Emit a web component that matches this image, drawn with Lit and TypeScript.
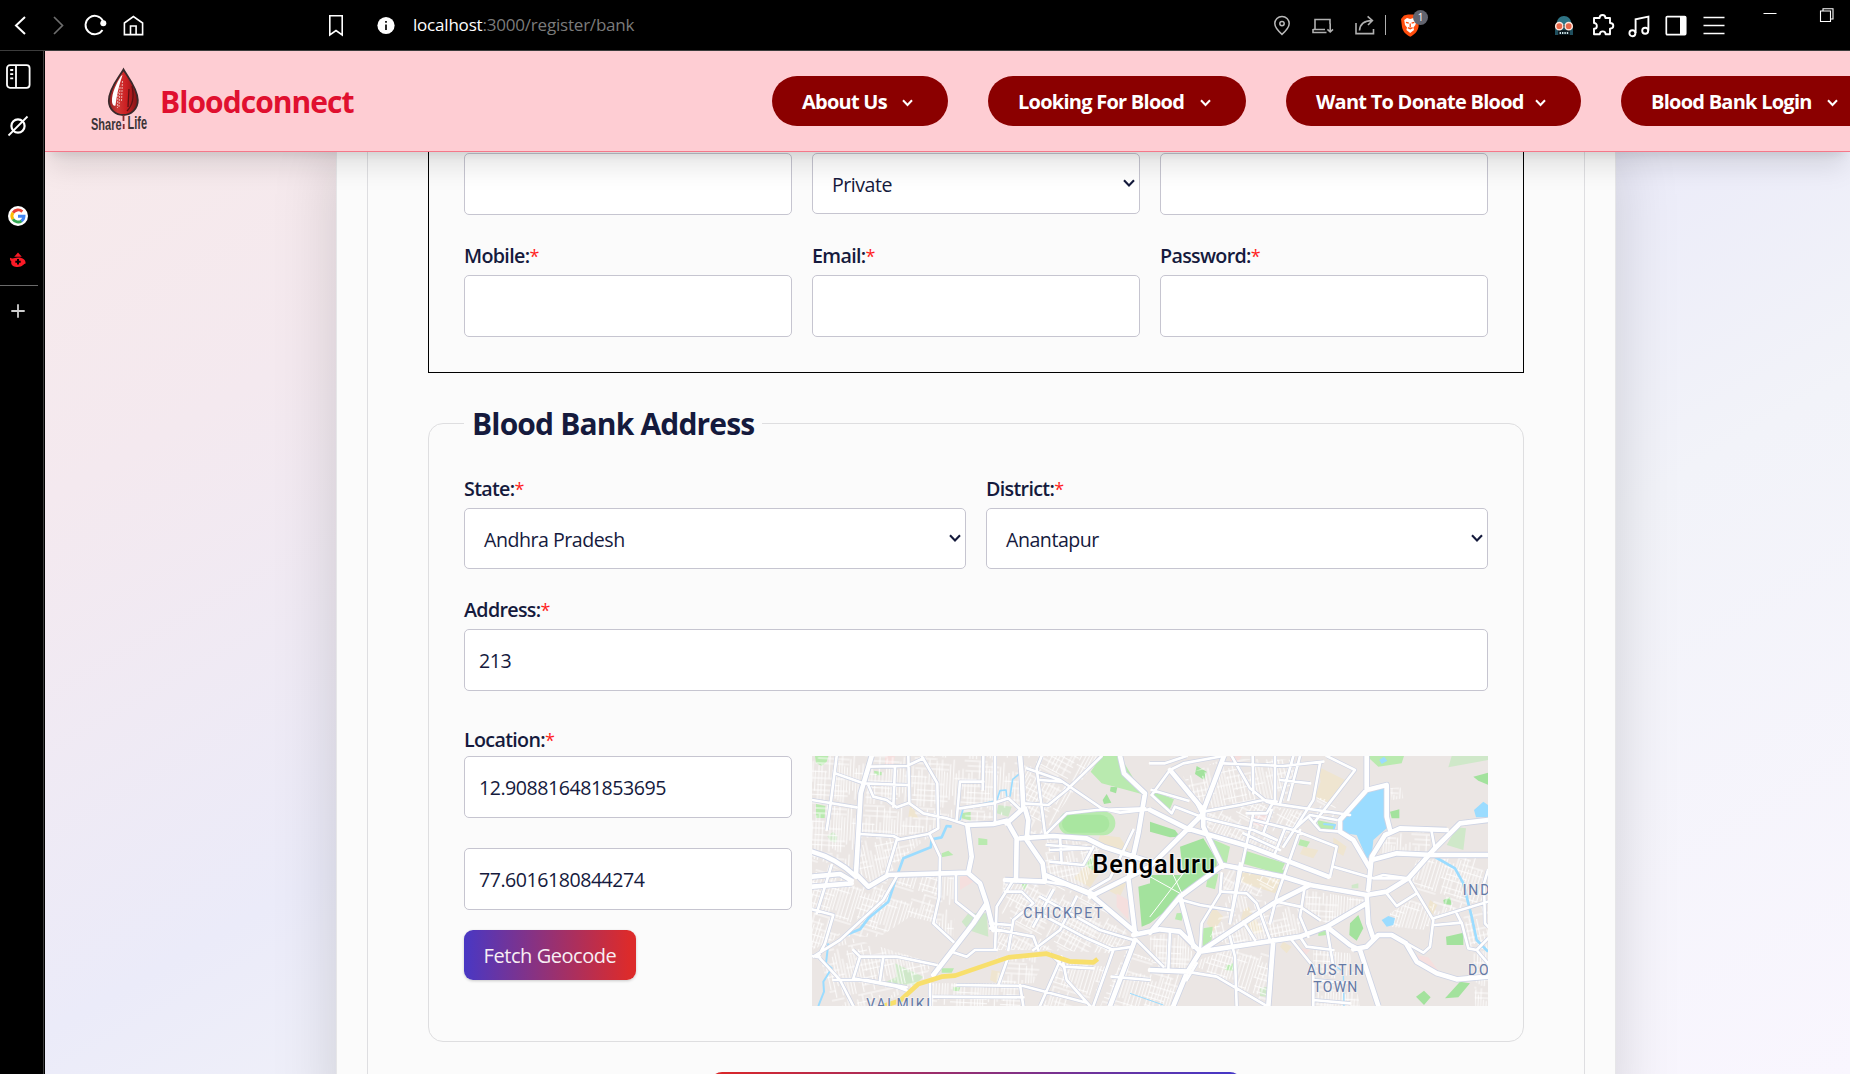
import { LitElement, html, svg, css, nothing } from "lit";
import { customElement, property } from "lit/decorators.js";

/* ---------- city map ---------- */

type Area = [string, string];

const GROUND_AREAS: Area[] = [
  ["#efe5d0", "M1555 50 L1640 92 L1585 158 L1545 140 L1562 95Z M860 345 L905 360 L870 412 L820 385Z M900 255 L960 262 L985 300 L945 310 L890 285Z M1345 470 L1390 545 L1350 555 L1320 520 L1330 480Z M1240 470 L1270 500 L1240 545 L1220 520Z M985 385 L960 440 L905 410 L985 375Z M335 165 L355 205 L325 200 L330 168Z M575 660 L602 665 L590 700 L570 690Z M1600 262 L1640 290 L1630 318 L1600 300Z M1890 450 L1912 465 L1895 500 L1880 485Z M1450 575 L1475 590 L1460 610 L1440 590Z M1320 360 L1450 385 L1425 430 L1320 395Z M1510 290 L1555 300 L1540 325 L1500 312Z"],
  ["#f5dfde", "M255 18 L285 18 L280 42 L255 42Z M480 380 L515 375 L520 395 L480 420Z M1352 198 L1405 192 L1395 232 L1355 222Z M950 430 L985 450 L985 510 L950 470Z M1848 615 L1885 622 L1915 662 L1870 648Z M1290 18 L1325 18 L1315 35 L1290 35Z M1505 595 L1530 600 L1515 620 L1505 612Z"],
  ["#cfe8c9", "M505 490 L560 490 L565 560 L505 540 L485 515Z M285 640 L370 680 L345 705 L250 700 L290 680Z M1955 18 L2064 18 L2064 30 L1945 52Z M1970 232 L1998 235 L1990 300 L1940 285Z M595 165 L635 170 L625 200 L590 190Z M82 258 L100 245 L112 260 L108 278 L90 272Z M1380 715 L1402 710 L1400 740 L1380 738Z M1655 405 L1675 400 L1675 415 L1655 415Z"],
  ["#b9eaaf", "M45 18 L85 18 L80 35 L65 48 L48 38Z M48 162 L76 168 L74 204 L48 204Z M905 18 L960 18 L1018 115 L1025 132 L905 100 L872 65Z M1065 125 L1122 148 L1105 188 L1055 135Z M1330 300 L1455 340 L1440 372 L1325 340Z M1230 265 L1290 290 L1280 340 L1255 330Z M1225 370 L1255 372 L1245 418 L1218 410Z M1210 535 L1238 530 L1235 570 L1208 590Z M535 264 L562 268 L562 285 L535 285Z M485 190 L512 185 L512 212 L485 205Z M425 655 L462 655 L455 668 L425 668Z M425 310 L445 302 L460 315 L425 322Z M222 62 L245 66 L245 76 L224 76Z M1440 360 L1460 358 L1455 380 L1438 372Z M665 402 L682 402 L672 420Z M1700 18 L1812 18 L1805 40 L1735 50Z M1500 268 L1530 275 L1520 292 L1495 285Z M1550 210 L1608 222 L1600 245 L1560 238Z M855 345 L880 315 L890 340 L880 362Z M915 410 L945 398 L935 418Z M1555 545 L1580 540 L1580 555 L1555 558Z M1130 490 L1150 488 L1145 512 L1125 508Z M460 712 L482 712 L476 724 L460 722Z M1280 645 L1300 640 L1300 662 L1275 660Z"],
  ["#a3e29d", "M1050 455 L1140 445 L1050 520 L1025 530 L1015 410 L1050 400Z M1140 290 L1210 265 L1250 330 L1250 370 L1150 440 L1050 520 L1050 375 L1150 375Z M1050 215 L1125 240 L1140 260 L1110 262 L1050 245Z M1190 48 L1220 65 L1212 90 L1185 72Z M1650 520 L1675 495 L1690 535 L1670 572 L1648 555Z M1770 185 L1798 178 L1798 205 L1775 205Z M1938 560 L1990 548 L1990 585 L1940 585Z M1935 745 L1980 695 L2010 700 L1975 742Z M1848 740 L1872 722 L1892 742 L1872 765Z M2020 80 L2064 68 L2064 104 L2035 92Z M908 150 L920 132 L934 158 L912 162Z M932 110 L952 112 L948 130 L930 124Z M1930 450 L1950 442 L1955 465 L1932 462Z"],
];

const WATER =
  "M1690 125 L1755 108 L1755 180 L1765 230 L1720 270 L1715 320 L1700 325 L1670 255 L1620 248 L1620 210 L1660 175Z M2022 180 L2050 155 L2064 165 L2064 202 L2028 202Z M1745 510 L1765 498 L1785 505 L1780 525 L1760 530Z M1738 30 L1752 20 L1762 32 L1745 42Z";

const STREAMS: [string, number][] = [
  ["M130 558 L180 538 L205 505 L265 455 L290 380 L310 325 L392 292 L395 268 L425 262 L440 228 L455 230", 8],
  ["M480 210 L490 175 L590 152 L600 122 L618 120 L620 140", 5],
  ["M630 140 L638 88 L660 70", 5],
  ["M85 580 L78 640 L95 655 L70 695 L72 725 L55 768", 6],
  ["M1895 315 L1965 355 L1990 400 L2015 500 L2030 570 L2064 605", 8],
  ["M1595 640 L1630 665 L1632 768", 4],
  ["M990 730 L1090 765", 3],
  ["M1570 222 L1605 225 L1600 240", 6],
];

const MAJOR_ROADS: string[] = [
  "M215 18 L182 130 L168 372 L205 410 L265 375 L505 368 L515 320 L502 225",
  "M36 305 Q110 325 168 380",
  "M36 410 L155 400",
  "M36 380 L120 372 L155 392",
  "M502 225 L580 222 L620 212 L650 265 L648 390",
  "M620 220 L670 175 L665 75 L660 18",
  "M675 175 L685 210 L680 270 L728 340 L735 395",
  "M505 370 L540 400 L560 460 L520 520 L400 675",
  "M560 460 L580 540",
  "M660 265 L760 258 L860 265 L910 290 L1050 335",
  "M735 375 L870 432 L1010 550",
  "M615 390 L735 395",
  "M960 18 L972 70 L1035 130 L1015 250 L985 385 L1005 550",
  "M1050 180 L1160 235 L1350 290 L1585 380",
  "M1110 60 L1210 180 L1210 230 L1268 350",
  "M1272 18 L1205 195 L1050 350 L870 440",
  "M1268 345 L1450 380 L1530 405 L1700 435 L1760 425 L1825 385 L1900 300 L1980 220 L2064 210",
  "M1050 548 L1140 440 L1262 350",
  "M1000 555 L1080 538 L1140 545 L1200 605 L1500 560 L1580 530",
  "M1200 605 L1420 460 L1530 405",
  "M1200 605 L1160 670 L1120 768",
  "M1050 660 L1165 665",
  "M1140 440 L1180 590",
  "M930 768 L1005 570",
  "M1580 530 L1650 585 L1680 600 L1735 768",
  "M1580 530 L1700 460",
  "M1660 598 L1700 590 L1735 555 L1775 555 L1818 580 L1850 635 L1910 670 L1970 688 L2064 680",
  "M1420 570 L1405 768",
  "M1700 435 L1705 520 L1720 565",
  "M1705 420 L1715 320 L1755 255 L1800 235 L1940 240",
  "M1700 18 L1700 120 L1760 105 L1760 200 L1770 240",
  "M1700 120 L1620 210 L1620 245 L1660 270 L1708 352",
  "M1715 330 L1790 310 L1900 315 L2064 315",
];

const MINOR_ROADS: string[] = [
  "M110 18 L92 160 L80 240",
  "M36 150 L170 172",
  "M105 70 L190 100 L320 105",
  "M285 50 L280 170",
  "M205 50 L320 48 L370 25",
  "M325 18 L328 160 L370 190 L440 205 L502 225",
  "M205 105 L220 140 L260 150 L290 172 L328 158",
  "M365 18 L412 100 L415 235 L385 252 L290 270 L260 370",
  "M180 252 L280 258 L300 268",
  "M390 255 L420 320 L418 440 L400 520 L460 575",
  "M470 210 L480 95 L550 95",
  "M550 18 L548 120",
  "M480 175 L580 160 L625 145 L660 178",
  "M585 18 L585 215",
  "M468 375 L468 455 L525 500",
  "M290 380 L250 450 L120 570 L40 620",
  "M95 345 L50 490",
  "M36 478 L100 495 L75 580 L55 620 L120 690 L160 768",
  "M36 618 L60 622",
  "M160 600 L180 620 L290 620 L410 645",
  "M180 620 L160 685 L290 710 L330 725",
  "M250 620 L240 690",
  "M100 690 L200 690 L320 712",
  "M680 55 L780 90 L905 175 L960 188 L1050 178",
  "M725 18 L710 55 L735 250",
  "M905 18 L800 120 L745 165 L670 160",
  "M720 90 L785 95",
  "M740 250 L800 190 L890 180 L1035 175",
  "M740 285 L870 295 L750 300",
  "M750 335 L850 345 L880 290",
  "M780 260 L785 340",
  "M735 395 L830 410 L880 430",
  "M640 390 L590 470 L585 600",
  "M615 425 L665 425 L700 460 L640 510 L625 600",
  "M570 520 L630 525",
  "M570 535 L700 560 L715 600",
  "M700 480 L850 560 L940 600",
  "M720 440 L900 540 L1000 570",
  "M760 420 L700 530",
  "M830 440 L780 540 L700 600",
  "M455 605 L500 620 L525 600 L590 600",
  "M390 700 L390 768",
  "M470 705 L670 708 L860 758",
  "M400 740 L670 742",
  "M660 705 L670 768",
  "M750 610 L790 650 L880 655",
  "M790 640 L800 690 L870 768",
  "M785 620 L720 768",
  "M940 600 L880 768",
  "M1010 570 L1090 650",
  "M935 680 L1050 690",
  "M930 600 L1000 590",
  "M625 620 L595 705",
  "M1000 240 L930 385 L870 420",
  "M1050 40 L1095 40 L1160 18",
  "M1055 135 L1110 60 L1150 40 L1270 18",
  "M1055 135 L1115 190 L1125 170 L1215 205 L1360 240 L1430 270",
  "M1055 120 L1165 152",
  "M1110 60 L1190 160 L1205 190",
  "M1210 185 L1320 165 L1390 150 L1430 155",
  "M1270 40 L1450 48 L1570 35",
  "M1295 18 L1350 115 L1400 155 L1415 160 L1650 195",
  "M1358 18 L1360 130",
  "M1425 18 L1425 160",
  "M1500 18 L1465 150",
  "M1480 18 L1440 160",
  "M1580 18 L1665 60 L1545 215",
  "M1560 40 L1540 150 L1450 290",
  "M1440 90 L1530 100",
  "M1360 190 L1325 350 L1290 520",
  "M1415 180 L1390 250 L1430 270",
  "M1340 190 L1400 190 L1415 165",
  "M1330 250 L1440 300",
  "M1455 235 L1425 310",
  "M1360 210 L1480 240 L1610 290 L1590 380",
  "M1500 240 L1430 440 L1410 520",
  "M1530 205 L1560 240 L1620 245",
  "M1480 240 L1530 195 L1610 210",
  "M1320 340 L1290 520",
  "M1265 370 L1260 430 L1205 520 L1200 600",
  "M1265 425 L1340 430 L1370 460 L1410 570",
  "M1145 450 L1200 465 L1290 480",
  "M1430 455 L1500 470 L1560 510",
  "M1515 405 L1500 500 L1525 560",
  "M1500 560 L1520 590 L1600 600",
  "M1475 570 L1540 650 L1540 768",
  "M1580 530 L1600 650",
  "M1330 515 L1365 570",
  "M1290 560 L1305 620 L1310 768",
  "M1160 665 L1250 680 L1400 768",
  "M1110 540 L1105 660",
  "M1160 690 L1190 640",
  "M1600 350 L1720 385 L1825 385",
  "M1720 385 L1750 375 L1825 385",
  "M1825 385 L1900 510 L1890 590 L1870 608 L1820 580",
  "M1760 430 L1790 468 L1850 430",
  "M1895 245 L1905 300",
  "M1900 505 L2064 455",
  "M1905 525 L1985 518 L2005 595 L2030 600 L2064 565",
  "M1985 520 L1970 490",
  "M2064 360 L2052 400 L2055 520 L2064 530",
  "M2030 600 L2064 640",
  "M1540 750 L1650 760",
  "M1540 690 L1650 700",
];

/* regions covered by the fine street grid: outline and pattern index */
const BLOCKS: [string, number][] = [
  ["M36 18 H215 L180 180 L170 380 L36 300Z", 0],
  ["M36 300 L160 390 L205 410 L265 385 L240 450 L100 570 L36 600Z", 1],
  ["M215 18 H410 L412 240 L280 260 L180 250Z", 0],
  ["M180 250 L400 250 L300 330 L265 380 L205 410 L170 370Z", 2],
  ["M410 18 H665 L660 180 L500 225 L415 200Z", 0],
  ["M290 380 L420 372 L410 520 L330 500 L240 560 L130 560Z", 1],
  ["M60 620 L140 560 L240 590 L400 640 L370 690 L240 768 H100Z", 2],
  ["M390 700 L660 700 V768 H390Z", 0],
  ["M425 380 L470 380 L460 560 L400 530Z", 0],
  ["M670 18 H900 L780 180 L735 255 L680 250Z", 3],
  ["M740 255 L900 290 L850 420 L730 380Z", 2],
  ["M610 395 L735 395 L870 440 L1000 560 L930 610 L740 600 L590 600Z", 3],
  ["M590 620 L740 615 L700 700 L590 700Z", 0],
  ["M780 640 L930 650 L880 768 H730Z", 1],
  ["M980 600 L1160 670 L1120 768 H900Z", 1],
  ["M1050 560 L1130 545 L1180 610 L1160 660 L1050 655Z", 0],
  ["M1150 80 L1270 25 L1500 30 L1470 150 L1210 185Z", 2],
  ["M1210 190 L1360 160 L1540 190 L1420 310 L1210 240Z", 3],
  ["M1290 430 L1420 460 L1500 480 L1500 560 L1300 590 L1230 560Z", 2],
  ["M1270 350 L1450 385 L1400 440 L1270 430Z", 3],
  ["M1170 640 L1280 600 L1410 590 L1400 768 L1310 710Z", 1],
  ["M1540 600 L1650 610 L1680 768 H1540Z", 0],
  ["M1520 420 L1700 450 L1600 530 L1500 480Z", 0],
  ["M1760 245 L1890 240 L1890 310 L1740 310Z", 0],
  ["M1850 330 L2050 320 L2050 450 L1910 500 L1830 385Z", 1],
  ["M1770 490 L1850 440 L1895 510 L1880 540 L1770 530Z", 1],
  ["M1990 500 L2064 460 V600 L2010 590Z", 2],
  ["M2020 610 L2064 600 V768 H2025Z", 0],
  ["M1550 140 L1620 160 L1600 210 L1550 205Z", 3],
  ["M1770 115 L1805 110 L1810 145 L1775 150Z", 0],
];

const PATTERN_ANGLES = [3, 17, -12, 28];

/** Broken street segments for one repeating tile. */
function streetTile(seed: number, size: number): string {
  let s = seed * 7919 + 17;
  const rnd = () => {
    s = (s * 1103515245 + 12345) % 2147483648;
    return s / 2147483648;
  };
  let d = "";
  for (let p = 4; p < size; p += 8 + Math.floor(rnd() * 5)) {
    const a = Math.floor(rnd() * size * 0.4);
    const len = size * (0.4 + rnd() * 0.55);
    d += `M${p} ${a}V${Math.min(size, a + len)}`;
  }
  for (let p = 6; p < size; p += 14 + Math.floor(rnd() * 12)) {
    const a = Math.floor(rnd() * size * 0.4);
    const len = size * (0.4 + rnd() * 0.6);
    d += `M${a} ${p}H${Math.min(size, a + len)}`;
  }
  return d;
}

@customElement("city-map")
class CityMap extends LitElement {
  static styles = css`
    :host { display: block; }
    svg { display: block; width: 100%; height: 100%; }
    .case { fill: none; stroke: #cdd3e4; stroke-linejoin: round; }
    .road { fill: none; stroke: #fff; stroke-linejoin: round; stroke-linecap: round; }
    .tile { fill: none; stroke: #fff; stroke-width: 2.7; }
    .stream { fill: none; stroke: #9bdcff; stroke-linejoin: round; }
    .city { font: 500 76px "Roboto", sans-serif; fill: #000; stroke: #fff; stroke-width: 7; stroke-opacity: .55; paint-order: stroke; }
    .area { font: 400 42px "Roboto", sans-serif; fill: #6479a6; stroke: #f3f0ef; stroke-width: 5; paint-order: stroke; }
  `;

  render() {
    return html`<svg viewBox="36 18 2028 750" preserveAspectRatio="none">
      <defs>
        ${PATTERN_ANGLES.map((a, i) => svg`<pattern id=${"g" + i} width="150" height="150" patternUnits="userSpaceOnUse" patternTransform=${`rotate(${a})`}>
          <path class="tile" d=${streetTile(i + 2, 150)}></path></pattern>`)}
      </defs>
      <rect x="36" y="18" width="2028" height="750" fill="#ebe6e4"></rect>
      ${GROUND_AREAS.map(([c, d]) => svg`<path fill=${c} d=${d}></path>`)}
      <rect x="776" y="184" width="170" height="72" rx="36" fill="#b9eaaf"></rect>
      <rect x="786" y="194" width="142" height="54" rx="27" fill="#a9e6a0"></rect>
      ${BLOCKS.map(([d, i]) => svg`<path d=${d} fill=${`url(#g${i})`}></path>`)}
      ${STREAMS.map(([d, w]) => svg`<path class="stream" d=${d} stroke-width=${w}></path>`)}
      <path d=${WATER} fill="#9bdcff"></path>
      <path d=${MINOR_ROADS.join("")} class="case" stroke-width="12"></path>
      <path d=${MAJOR_ROADS.join("")} class="case" stroke-width="19"></path>
      <path d=${MINOR_ROADS.join("")} class="road" stroke-width="8"></path>
      <path d=${MAJOR_ROADS.join("")} class="road" stroke-width="14"></path>
      <path class="road" stroke-width="3" d="M1050 380 L1140 430 M1150 370 L1050 500 M1120 375 L1150 440"></path>
      <path d="M250 768 L300 752 L355 702 L425 680 L465 677 L625 622 L740 611 L808 634 L880 637 L893 627" fill="none" stroke="#f8df6c" stroke-width="14" stroke-linejoin="round"></path>
      <text class="city" x="877" y="370" textLength="368">Bengaluru</text>
      <text class="area" x="670" y="504" textLength="238">CHICKPET</text>
      <text class="area" x="1520" y="675" textLength="172">AUSTIN</text>
      <text class="area" x="1540" y="726" textLength="132">TOWN</text>
      <text class="area" x="1988" y="435" textLength="80">IND</text>
      <text class="area" x="2004" y="675" textLength="62">DO</text>
      <text class="area" x="199" y="777" textLength="191">VALMIKI</text>
    </svg>`;
  }
}

/* ---------- form controls ---------- */

@customElement("form-field")
class FormField extends LitElement {
  @property() label = "";
  @property() value = "";
  @property() kind = "input";

  static styles = css`
    :host { display: block; }
    .label { height: 30px; margin-bottom: 5px; padding-top: 1px; box-sizing: border-box; line-height: 30px; font-size: 19.7px; font-weight: 600; letter-spacing: -0.68px; white-space: nowrap; }
    .star { color: #ff1f1f; font-weight: 400; font-size: 18px; }
    .box { box-sizing: border-box; display: flex; align-items: center; height: 62px; padding: 0 15px 0 14px;
      background: #fff; border: 1px solid #c6c5d0; border-radius: 5px; font-size: 19.6px; letter-spacing: -0.48px; }
    .box.select { height: 61px; padding: 2px 4px 0 19px; justify-content: space-between; }
    svg { width: 12px; height: 8px; margin-top: -3px; fill: none; stroke: #141a3c; stroke-width: 2.1; }
  `;

  render() {
    return html`
      ${this.label ? html`<div class="label">${this.label}<span class="star">*</span></div>` : nothing}
      <div class="box ${this.kind}">
        <span>${this.value}</span>
        ${this.kind === "select" ? html`<svg viewBox="0 0 12 8"><path d="M1 1.2 L6 6.4 L11 1.2"></path></svg>` : nothing}
      </div>`;
  }
}

/* ---------- browser chrome icons ---------- */

const I = {
  back: svg`<path d="M17 4 L8 12.5 L17 21" stroke-width="2"/>`,
  forward: svg`<path d="M8 4 L16.5 12.5 L8 21" stroke="#6d6d6d" stroke-width="1.7"/>`,
  reload: svg`<path d="M19 8 A9.2 9.2 0 1 0 18.5 17" stroke-width="1.9"/><circle cx="19.3" cy="10.3" r="3" fill="#fff" stroke="none"/>`,
  home: svg`<path d="M2.4 10 L11.4 3.6 L20.6 10 V21.6 H2.4Z M8.5 21.5 V13 H14.1 V21.5" stroke-width="1.6"/>`,
  bookmark: svg`<path d="M5.8 2.8 H18.2 V22 L12 17.6 L5.8 22Z" stroke-width="1.6"/>`,
  info: svg`<circle cx="12" cy="12.5" r="8.6" fill="#fff" stroke="none"/><path d="M12 11.5 V17 M12 8 V9.8" stroke="#111" stroke-width="1.8"/>`,
  pin: svg`<path d="M12 21.4 C7 17 4.8 14 4.8 10.6 A7.2 7.2 0 0 1 19.2 10.6 C19.2 14 17 17 12 21.4Z" stroke="#b9b9b9" stroke-width="1.5"/><circle cx="12" cy="10.6" r="2.2" stroke="#b9b9b9" stroke-width="1.5"/>`,
  laptop: svg`<path d="M4 16 V6.5 H19 V11 M2 16.5 H14 M2 16 V19.5 H15.5 M19.2 10.5 V18.8 M16.4 16.4 L19.2 19 L22 16.4" stroke="#b0b0b0" stroke-width="1.6"/>`,
  share: svg`<path d="M3 10 V20.6 H20.5 V16 M6.5 17.5 C7 11 11 7.6 19 7.6 M14.6 3.4 L19.4 7.6 L15 12" stroke="#b0b0b0" stroke-width="1.6"/>`,
  brave: svg`<path d="M6 2.5 L10 1.5 H15 L19 3 L21 6 L20.5 14 C19.5 19 16 21.5 12.3 23.8 C8 21.5 5 19 4 14 L3 6Z" fill="#ff4d0d" stroke="none"/>
    <path d="M6.2 7 L9 5 L12.2 6 L15.5 5 L18.4 7 L17.4 12 L15.4 14.6 L16 17 L12.2 20 L8.4 17 L9 14.6 L7 12Z" fill="#fff" stroke="none"/>
    <path d="M8 9.3 L10.8 10.2 M16.4 9.3 L13.6 10.2 M12.2 10.5 V14.4 M9.8 14.6 L12.2 15.8 L14.6 14.6" stroke="#ff4d0d" stroke-width="1.3"/>`,
  robot: svg`<path d="M4.5 12 C4.5 6 8 3 12 3 C16 3 19.5 6 19.5 12Z" fill="#2f7485" stroke="none"/><path d="M3 14 H21 V22 H3Z" fill="#1f4f5e" stroke="none"/><path d="M6 17 H18 V22 H6Z" fill="#0c1a20" stroke="none"/><path d="M7.6 20 H16.8" stroke="#cfe6ea" stroke-width="1.8" stroke-dasharray="1.4 1"/><circle cx="7.3" cy="13.2" r="3.6" fill="#e8694a" stroke="#ffe6dc" stroke-width="1.5"/><circle cx="16.7" cy="13.2" r="3.6" fill="#e8694a" stroke="#ffe6dc" stroke-width="1.5"/>`,
  puzzle: svg`<path d="M3 5 H8.6 C8.6 0.9 14.4 0.9 14.4 5 H19 V10 C23.4 10 23.4 15.6 19 15.6 V21.3 H14.6 C14.6 17.4 8.8 17.4 8.8 21.3 H3 V15.8 C6.8 15.8 6.8 10 3 10Z" stroke-width="1.9" stroke-linejoin="round"/>`,
  music: svg`<path d="M8.6 20 V6.2 L21.4 3.6 V17.6" stroke-width="1.9"/><circle cx="5.4" cy="20.2" r="3" stroke-width="1.9"/><circle cx="18.2" cy="17.8" r="3" stroke-width="1.9"/>`,
  panel: svg`<rect x="2.3" y="3.6" width="19.4" height="18" rx="1" stroke-width="1.7"/><path d="M16 3.6 H22 V21.6 H16Z" fill="#fff" stroke="none"/>`,
  menu: svg`<path d="M1.5 4.5 H22.5 M1.5 12.5 H22.5 M1.5 20.5 H22.5" stroke-width="1.7"/>`,
  minimize: svg`<path d="M5.5 1.5 H18.5" stroke-width="1"/>`,
  restore: svg`<path d="M5.5 3 H15.5 V13.5 H5.5Z M8 3 V0.8 H18 V11 H16" stroke-width="1.1"/>`,
};

const TOOLBAR: [keyof typeof I, string][] = [
  ["back", "m8"], ["forward", "m14"], ["reload", "m14"], ["home", "m14"], ["bookmark", "m178"], ["info", "m26"],
];
const TOOLS: [keyof typeof I, string][] = [
  ["robot", "m130"], ["puzzle", "m15"], ["music", "m12"], ["panel", "m13"], ["menu", "m14"],
];

const NAV: [string, string][] = [
  ["About Us", "w1"], ["Looking For Blood", "w2"], ["Want To Donate Blood", "w3"], ["Blood Bank Login", "w4"],
];

@customElement("app-root")
class AppRoot extends LitElement {
  static styles = css`
    :host { display: grid; grid-template-rows: 51px 1023px; width: 1850px; height: 1074px; overflow: hidden;
      background: #000; color: #151a3d; font: 20px "Open Sans", "Noto Sans", sans-serif; }
    * { box-sizing: border-box; }

    .toolbar { display: flex; align-items: flex-start; padding-top: 13px; border-bottom: 1px solid #3c3c3c; }
    .toolbar svg { flex: none; width: 24px; height: 24px; fill: none; stroke: #fff; overflow: visible; }
    .m8 { margin-left: 8px; } .m12 { margin-left: 12px; } .m13 { margin-left: 13px; } .m14 { margin-left: 14px; }
    .m15 { margin-left: 15px; } .m17 { margin-left: 17px; } .m18 { margin-left: 18px; } .m26 { margin-left: 26px; }
    .m130 { margin-left: 130px; } .m178 { margin-left: 178px; }
    .url { flex: none; width: 857px; padding-left: 15px; font-size: 17px; line-height: 24px; color: #7b7b7b; letter-spacing: -0.2px; white-space: nowrap; }
    .url b { color: #fff; font-weight: 400; }
    .rule { flex: none; width: 1px; height: 20px; margin: 2px 0 0 8px; background: #b0b0b0; }
    .shield { flex: none; position: relative; display: flex; margin-left: 12px; }
    .badge { position: absolute; left: 15px; top: -3px; width: 15px; height: 15px; border-radius: 50%; background: #62646f;
      color: #fff; font: 10px/15px "Open Sans", sans-serif; text-align: center; }
    .toolbar .min { margin: -1px 0 0 32px; }
    .toolbar .res { margin: -5px 0 0 33px; }

    .body { display: grid; grid-template-columns: 45px 1805px; }
    .side { display: flex; flex-direction: column; width: 44px; border-right: 1px solid #3c3c3c; padding-top: 12px; }
    .side svg { width: 26px; height: 26px; margin-left: 5px; fill: none; stroke: #fff; }
    .side .s2 { margin-top: 24px; } .side .s3 { margin-top: 64px; } .side .s4 { margin-top: 19px; }
    .side hr { width: 38px; height: 1px; margin: 11px 0 0; border: 0; background: #6a6a6a; }
    .side .s5 { margin-top: 12px; }

    .page { display: flex; flex-direction: column; height: 1023px; overflow: hidden;
      background: linear-gradient(to bottom right, #f8eaea 0%, #f4e9ef 22%, #ebebf9 48%, #f2f3f9 66%, #f9f6fe 100%); }
    header { position: relative; z-index: 2; flex: none; display: flex; align-items: center; height: 101px; padding: 0 0 1px 45px;
      background: #fecdd3; border-bottom: 1px solid #f4788a;
      box-shadow: 0 20px 25px -5px rgba(0,0,0,.1), 0 8px 10px -6px rgba(0,0,0,.1); }
    .logo { flex: none; width: 58px; height: 66px; margin-top: -1px; overflow: visible; }
    .logo text { font: 600 11px "Liberation Sans", sans-serif; fill: #3b3437; }
    .brand { flex: none; width: 624px; padding-left: 12px; margin-top: 2px; font-size: 30px; font-weight: 700; color: #e0102f; letter-spacing: -0.95px; }
    nav { flex: none; display: flex; gap: 40px; }
    .pill { flex: none; display: flex; align-items: center; justify-content: space-between; height: 50px; padding: 1px 35px 0 30px;
      border-radius: 25px; background: #8b0000; color: #fff; font-weight: 700; letter-spacing: -0.75px; white-space: nowrap; }
    .pill svg { width: 11px; height: 8px; margin-top: 4px; fill: none; stroke: #fff; stroke-width: 2; }
    .w1 { width: 176px; } .w2 { width: 258px; } .w3 { width: 295px; } .w4 { width: 252px; }

    .card { width: 1280px; height: 980px; margin-left: 291px; padding: 0 30px; background: #fbfbfb;
      border: solid #e6e6e8; border-width: 0 1px; box-shadow: 0 0 60px rgba(0,0,0,.15); }
    .sheet { height: 980px; padding: 0 60px; border: solid #dedee1; border-width: 0 1px; }
    .details { display: grid; grid-template-columns: repeat(3, 1fr); gap: 25px 20px; align-items: start;
      padding: 1px 35px 35px; border: 1px solid #000; border-top: 0; }
    .address { display: flex; flex-direction: column; margin: 28px 0 0; padding: 27px 35px 35px; border: 1px solid #dedee0; border-radius: 15px; }
    legend { width: 298px; height: 45px; padding: 0 0 0 8px; font-size: 30px; line-height: 46px; font-weight: 700; letter-spacing: -0.84px; white-space: nowrap; }
    .two { display: grid; grid-template-columns: 1fr 1fr; gap: 20px; margin-bottom: 25px; }
    .loc { margin-top: 33px; height: 32px; padding-top: 1px; line-height: 30px; font-size: 19.7px; font-weight: 600; letter-spacing: -0.68px; }
    .loc span { color: #ff1f1f; font-weight: 400; font-size: 18px; }
    .place { display: grid; grid-template-columns: 328px 676px; gap: 20px; }
    .coords { display: flex; flex-direction: column; align-items: stretch; }
    .coords form-field + form-field { margin-top: 30px; }
    .fetch { width: 172px; height: 50px; margin-top: 20px; border-radius: 9px; background: linear-gradient(to right, #4338ca -4%, #dc2b2b 96%);
      box-shadow: 0 1px 3px rgba(0,0,0,.2); color: #f8eef4; line-height: 51px; text-align: center; letter-spacing: -0.45px; font-weight: 500; }
    city-map { width: 676px; height: 250px; }
    .submit { width: 532px; height: 50px; margin: 30px auto 0; border-radius: 12px; background: linear-gradient(to right, #dc2626, #4338ca); }
  `;

  render() {
    const ic = (n: keyof typeof I, c: string) => html`<svg class=${c} viewBox="0 0 24 24">${I[n]}</svg>`;
    return html`
      <div class="toolbar">
        ${TOOLBAR.map(([n, c]) => ic(n, c))}
        <div class="url"><b>localhost</b>:3000/register/bank</div>
        ${ic("pin", "m15")}${ic("laptop", "m17")}${ic("share", "m18")}
        <div class="rule"></div>
        <div class="shield">${ic("brave", "")}<span class="badge">1</span></div>
        ${TOOLS.map(([n, c]) => ic(n, c))}
        ${ic("minimize", "min")}${ic("restore", "res")}
      </div>
      <div class="body">
        <div class="side">
          <svg viewBox="0 0 26 26"><rect x="2" y="2.2" width="22.6" height="22.6" rx="3" stroke-width="1.8"/><path d="M11 2.2 V24.8" stroke-width="1.8"/><path d="M5.2 7 H8.2 M5.2 11.2 H8.2 M5.2 15.4 H8.2" stroke-width="1.8"/></svg>
          <svg class="s2" viewBox="0 0 26 26"><circle cx="13" cy="13" r="6.6" stroke-width="2.2"/><path d="M3.5 22.5 L22.5 3.5" stroke-width="1.8"/></svg>
          <svg class="s3" viewBox="0 0 26 26"><circle cx="13" cy="13" r="10" fill="#fff" stroke="none"/>
            <g stroke-width="2.9"><path d="M17.3 8.6 A6 6 0 0 0 8 9.8" stroke="#ea4335"/><path d="M8 9.6 A6 6 0 0 0 8 16.4" stroke="#fbbc05"/><path d="M8 16.2 A6 6 0 0 0 16.7 17.8" stroke="#34a853"/><path d="M16.4 18 A6 6 0 0 0 19 13.2 H13" stroke="#4285f4"/></g></svg>
          <svg class="s4" viewBox="0 0 26 26"><g stroke="none" fill="#fb1a26"><path d="M13 4.6 L16.8 8.8 H9.2Z"/><path d="M5 9.8 C8 11.4 9.5 9.6 13 9.6 C18 9.6 20.8 12 20.6 15.6 C18.5 15.8 17.6 19.4 11.6 19 C8 18.6 5.4 16.4 6.4 13.4 C5.2 12.6 4.8 11.4 5 9.8Z"/></g><path d="M13 11 V16.4 M10.3 13.7 H15.7" stroke="#000" stroke-width="2"/></svg>
          <hr>
          <svg class="s5" viewBox="0 0 26 26"><path d="M13 6.3 V19.7 M6.3 13 H19.7" stroke="#cfcfcf" stroke-width="1.8"/></svg>
        </div>
        <div class="page">
          <header>
            <svg class="logo" viewBox="0 0 58 66">
              <defs><linearGradient id="drop" x1="0" x2="1"><stop offset="0" stop-color="#8e1d20"/><stop offset=".3" stop-color="#cf3a36"/><stop offset=".6" stop-color="#cc1f22"/><stop offset="1" stop-color="#7e1315"/></linearGradient></defs>
              <path d="M33.5 2.5 C30 9 18.5 22 18.8 34 C19 43 26 48 33.2 48 C41 48 48 42 47.8 33 C47.5 21 37 9 33.5 2.5Z" fill="url(#drop)" stroke="#3a2a2c" stroke-width="1.8"/>
              <path d="M31 9 C27 16 21.5 25 22 35 C22.4 38 24 39.5 25.5 38.5 C26.5 29 29 18 32.5 8Z" fill="#fff"/>
              <path d="M30 20 L29 40 M32.5 14 L31.5 34 M28 25 L27.5 41" stroke="#eab0ae" stroke-width="1" stroke-dasharray="2 1"/>
              <path d="M42 19 C44 28 44 37 37 44 M39 22 L38 40" stroke="#5d1214" stroke-width="1.3" fill="none"/>
              <path d="M33.5 48 V54 M33.7 57 V62" stroke="#8c2a2c" stroke-width="1.8"/>
              <text transform="translate(1 62.5) scale(1 1.5)">Share</text>
              <text transform="translate(37.5 62) scale(1 1.6)">Life</text>
            </svg>
            <div class="brand">Bloodconnect</div>
            <nav>
              ${NAV.map(([t, c]) => html`<div class="pill ${c}"><span>${t}</span><svg viewBox="0 0 11 8"><path d="M1 1.2 L5.5 6 L10 1.2"/></svg></div>`)}
            </nav>
          </header>
          <div class="card"><div class="sheet">
            <div class="details">
              <form-field></form-field>
              <form-field kind="select" value="Private"></form-field>
              <form-field></form-field>
              <form-field label="Mobile:"></form-field>
              <form-field label="Email:"></form-field>
              <form-field label="Password:"></form-field>
            </div>
            <fieldset class="address">
              <legend>Blood Bank Address</legend>
              <div class="two">
                <form-field kind="select" label="State:" value="Andhra Pradesh"></form-field>
                <form-field kind="select" label="District:" value="Anantapur"></form-field>
              </div>
              <form-field label="Address:" value="213"></form-field>
              <div class="loc">Location:<span>*</span></div>
              <div class="place">
                <div class="coords">
                  <form-field value="12.908816481853695"></form-field>
                  <form-field value="77.6016180844274"></form-field>
                  <div class="fetch">Fetch Geocode</div>
                </div>
                <city-map></city-map>
              </div>
            </fieldset>
            <div class="submit"></div>
          </div></div>
        </div>
      </div>`;
  }
}
